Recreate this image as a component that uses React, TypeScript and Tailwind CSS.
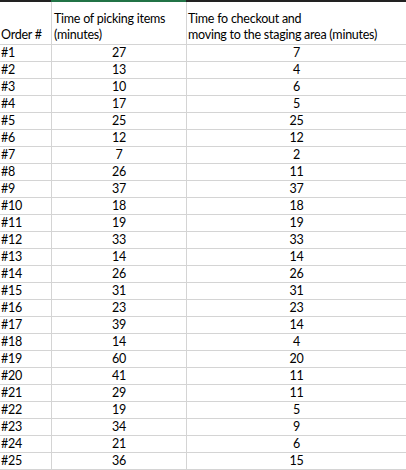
const rows: [number, number][] = [
  [27, 7],
  [13, 4],
  [10, 6],
  [17, 5],
  [25, 25],
  [12, 12],
  [7, 2],
  [26, 11],
  [37, 37],
  [18, 18],
  [19, 19],
  [33, 33],
  [14, 14],
  [26, 26],
  [31, 31],
  [23, 23],
  [39, 14],
  [14, 4],
  [60, 20],
  [41, 11],
  [29, 11],
  [19, 5],
  [34, 9],
  [21, 6],
  [36, 15],
];

export default function App() {
  return (
    <div
      className="w-[406px] h-[470px] overflow-hidden bg-white text-black text-[12.5px] tracking-[-0.25px]"
      style={{ fontFamily: "Lato, 'Liberation Sans', sans-serif" }}
    >
      <div className="flex h-[2px]">
        <div className="w-[51px] bg-[#222]" />
        <div className="w-[135px] bg-[#217346]" />
        <div className="flex-1 bg-[#222]" />
      </div>

      <div className="grid grid-cols-[52px_135px_1fr] h-[43px] leading-[16px]">
        <div className="border-r border-b border-[#d4d4d4] flex items-end pl-[1px] pb-[1px]">Order #</div>
        <div className="border-r border-b border-[#d4d4d4] flex items-end pl-[2px] pb-[1px]">
          Time of picking items
          <br />
          (minutes)
        </div>
        <div className="border-b border-[#d4d4d4] flex items-end pl-[1px] pb-[1px] whitespace-nowrap">
          Time fo checkout and
          <br />
          moving to the staging area (minutes)
        </div>
      </div>

      {rows.map(([pick, checkout], i) => (
        <div key={i} className="grid grid-cols-[52px_135px_1fr] h-[17px] leading-[16px]">
          <div className="border-r border-b border-[#d4d4d4] pl-[1px]">#{i + 1}</div>
          <div className="border-r border-b border-[#d4d4d4] text-center">{pick}</div>
          <div className="border-b border-[#d4d4d4] text-center">{checkout}</div>
        </div>
      ))}
    </div>
  );
}
